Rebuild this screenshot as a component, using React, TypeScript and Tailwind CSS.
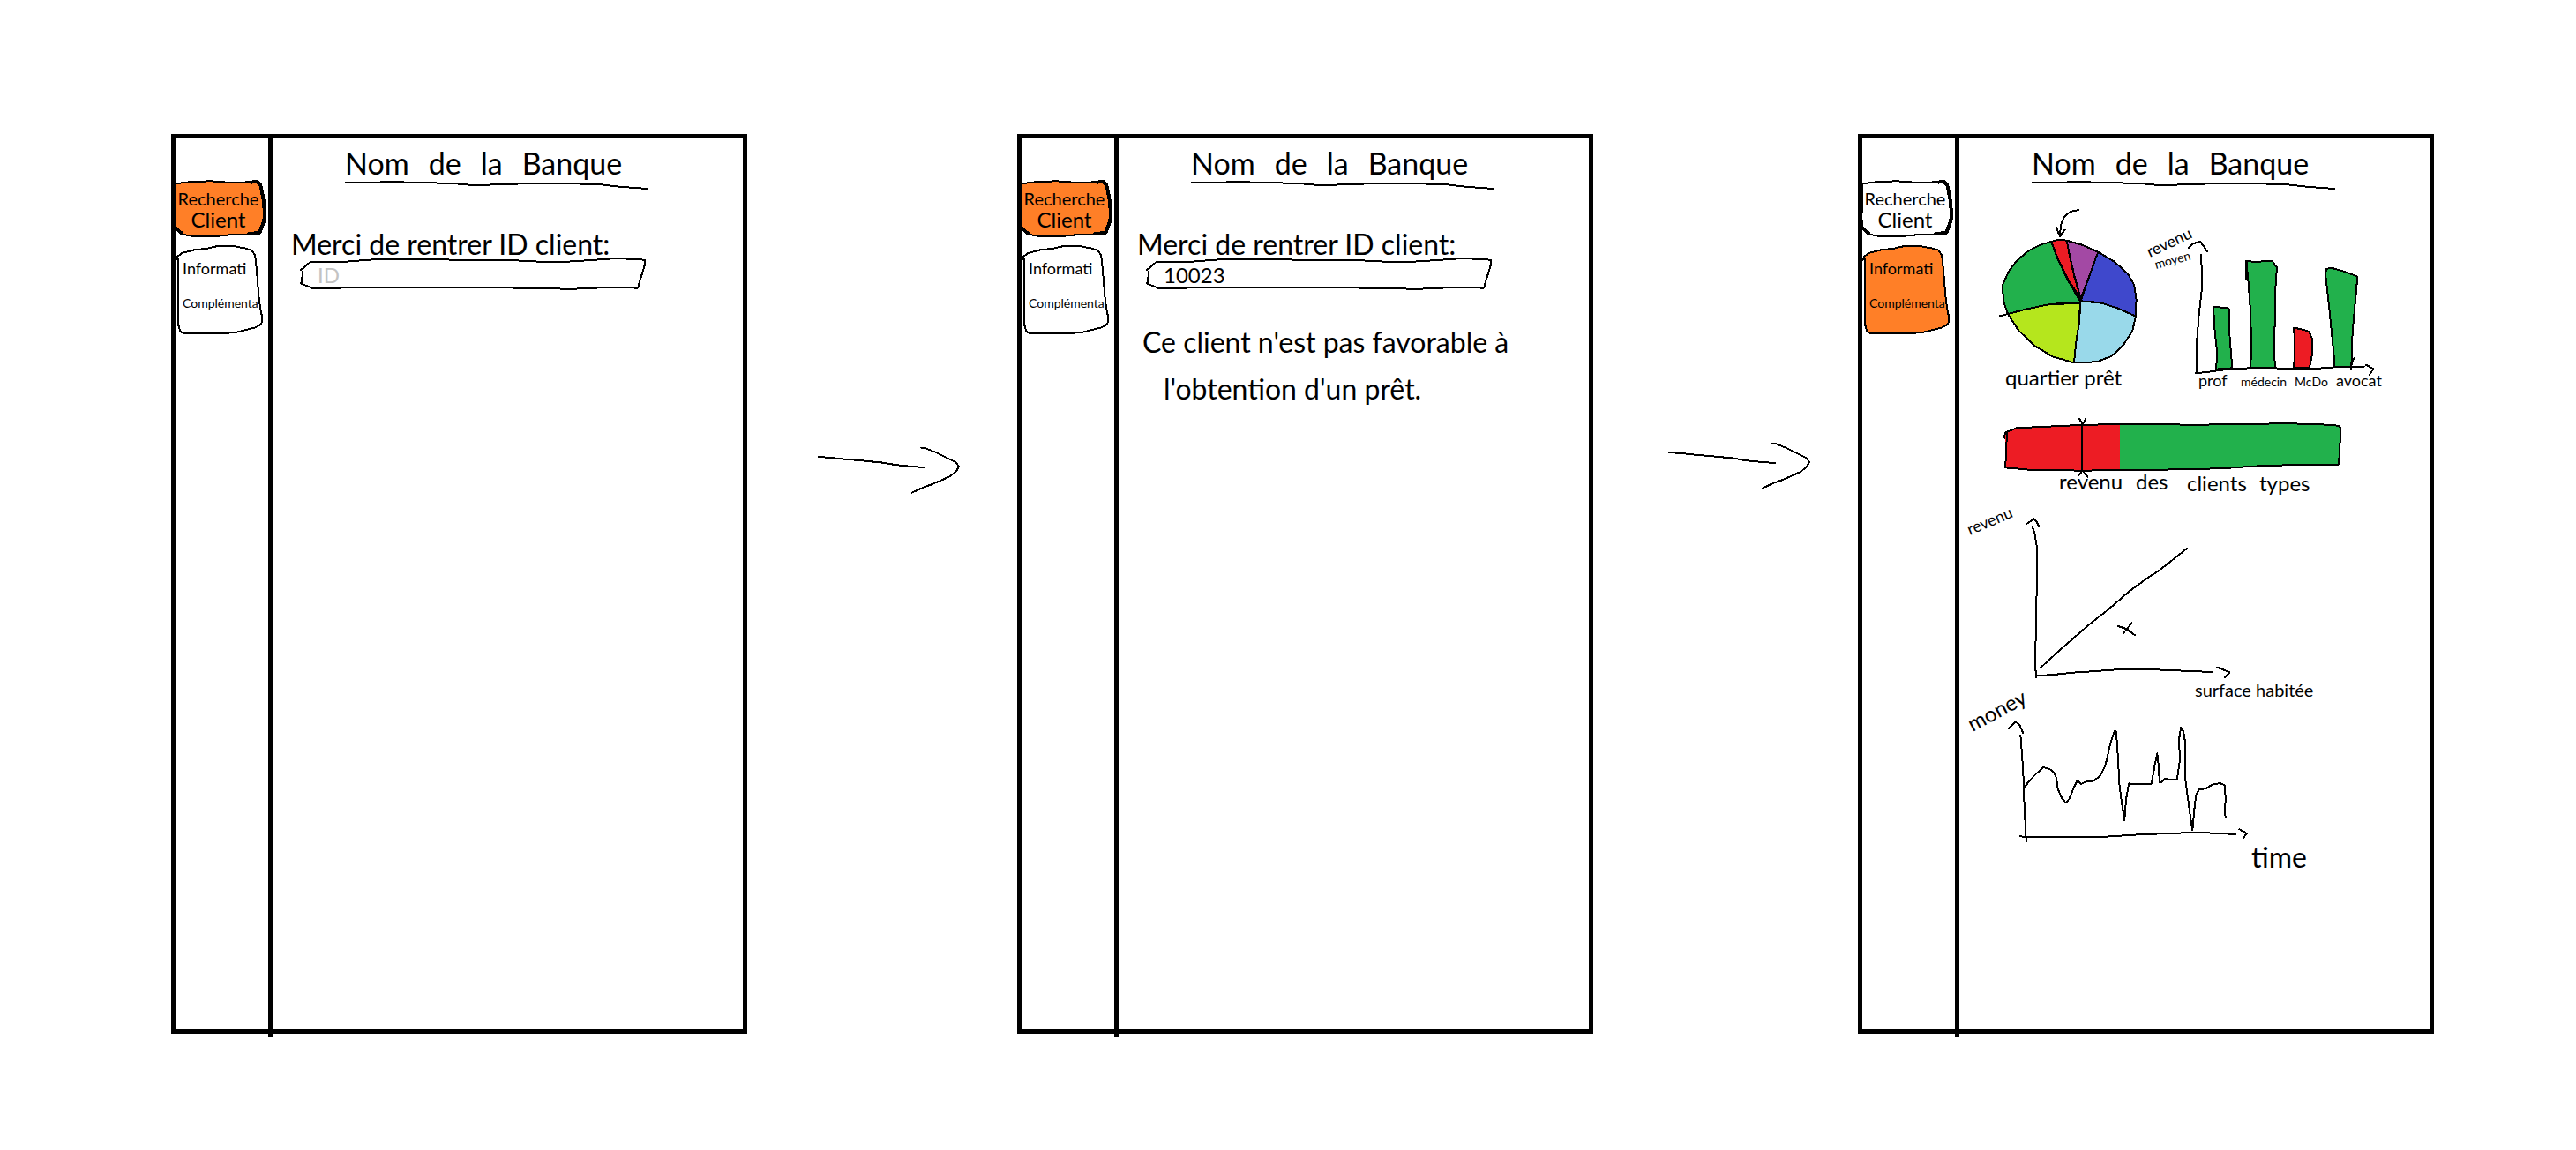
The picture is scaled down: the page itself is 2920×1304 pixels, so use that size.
import type { ReactNode } from "react";

type Page = "recherche" | "informations";

const ORANGE = "#ff7f27";
const GREEN = "#22b14c";
const RED = "#ed1c24";

const pen = {
  fill: "none",
  stroke: "#000",
  strokeWidth: 2,
  strokeLinejoin: "round" as const,
  strokeLinecap: "round" as const,
};

function Stroke({ d, fill = "none", width = 2 }: { d: string; fill?: string; width?: number }) {
  return <path d={d} {...pen} fill={fill} strokeWidth={width} vectorEffect="non-scaling-stroke" />;
}

function SearchButton({ active }: { active: boolean }) {
  return (
    <button type="button" className="relative h-16 w-full pr-2 text-xl leading-6">
      <svg viewBox="22 66 105 64" className="absolute inset-0 h-full w-full overflow-visible" shapeRendering="crispEdges">
        <g transform="scale(.3333)">
          <Stroke
            d="M66 208 L120 201 L185 199 L240 203 L300 203 L340 199 L356 212 L362 240 L368 275 L368 325 L360 350 L352 374 L310 380 L250 382 L190 388 L120 386 L88 380 L68 362 L64 330 L66 250 Z"
            fill={active ? ORANGE : "#fff"}
            width={2}
          />
          <Stroke d="M325 203 L342 200 L354 210 L360 235 L366 270 L370 320 L364 342 L352 374 L315 379 M88 378 L66 358" width={4} />
        </g>
      </svg>
      <span className="relative block">Recherche</span>
      <span className="relative block text-2xl leading-6">Client</span>
    </button>
  );
}

function InfoButton({ active }: { active: boolean }) {
  return (
    <button type="button" className="relative mt-2 h-[102px] w-full pb-2 pl-2 text-left leading-10">
      <svg viewBox="22 138 105 102" className="absolute inset-0 h-full w-full overflow-visible" shapeRendering="crispEdges">
        <g transform="scale(.3333)">
          <Stroke
            d="M68 468 L73 455 L88 444 L130 433 L175 428 L205 421 L260 420 L300 427 L325 434 L336 450 L342 500 L348 580 L354 630 L361 665 L358 686 L335 698 L270 714 L215 718 L95 718 L82 710 L76 690 L74 620 L76 540 L74 460"
            fill={active ? ORANGE : "#fff"}
          />
        </g>
      </svg>
      <span className="relative block text-lg leading-10">Informati</span>
      <span className="relative block text-sm leading-10">Complémenta</span>
    </button>
  );
}

function Title() {
  return (
    <header className="pt-2 pl-[82px]">
      <h1 className="flex gap-[22px] text-[34px] leading-10">
        <span>Nom</span>
        <span>de</span>
        <span>la</span>
        <span>Banque</span>
      </h1>
      <svg width="345" height="11" viewBox="0 0 345 11" shapeRendering="crispEdges" className="block">
        <path d="M1 2 L31 2 L49 1 L122 3 L144 5 L187 4 L205 3 L244 3 L287 4 L315 7 L343 9" {...pen} />
      </svg>
    </header>
  );
}

function Screen({ page, children }: { page: Page; children: ReactNode }) {
  return (
    <section className="flex min-h-[1020px] min-w-0 flex-1 border-[5px] border-black">
      <nav className="-mb-[9px] w-[110px] shrink-0 border-r-[5px] border-black pt-12">
        <SearchButton active={page === "recherche"} />
        <InfoButton active={page === "informations"} />
      </nav>
      <main className="min-w-0 flex-1">
        <Title />
        {children}
      </main>
    </section>
  );
}

function ClientForm({ id, value }: { id: string; value?: string }) {
  return (
    <form className="mt-[45px] pl-[21px]">
      <label htmlFor={id} className="block text-[32px] leading-8 whitespace-nowrap">
        Merci de rentrer ID client:
      </label>
      <div className="relative ml-[10px] h-9 w-[393px]">
        <svg viewBox="160 153 393 36" className="absolute inset-0 h-full w-full overflow-visible" shapeRendering="crispEdges">
          <g transform="scale(.4337 .3333)">
            <Stroke d="M372 498 L395 472 L470 472 L560 463 L900 464 L1010 471 L1070 470 L1200 459 L1270 464 L1270 482 L1252 560 L1190 557 L1085 563 L1000 562 L850 557 L520 558 L405 562 L372 545 L377 502" />
          </g>
        </svg>
        <input
          id={id}
          placeholder="ID"
          defaultValue={value}
          className="relative block h-full w-full bg-transparent pl-5 text-2xl outline-none placeholder:text-[#c3c3c3]"
        />
      </div>
    </form>
  );
}

function Arrow({ className }: { className: string }) {
  return (
    <div className={className}>
      <svg width="161" height="54" viewBox="26 26 161 54" shapeRendering="crispEdges" className="block">
        <g transform="scale(.3333)">
          <Stroke d="M80 114 L125 117 L160 121 L240 128 L300 134 L340 141 L400 147 L441 150" />
          <Stroke d="M429 83 L445 85 L480 99 L520 119 L548 133 L558 147 L550 161 L530 179 L500 193 L470 206 L435 219 L398 236" />
        </g>
      </svg>
    </div>
  );
}

function DistrictPie() {
  return (
    <svg width="160" height="215" viewBox="175 95 160 215" className="overflow-visible" role="img" aria-label="quartier prêt">
      <g transform="scale(.3333)" shapeRendering="crispEdges">
        <Stroke fill={GREEN} d="M806 608 L700 615 L620 632 L558 648 L543 605 L540 550 L560 505 L590 465 L630 432 L670 412 L706 402 L725 455 L760 530 Z" />
        <Stroke fill={RED} d="M806 596 L765 535 L728 460 L706 402 L725 396 L760 398 L768 450 L785 525 Z" />
        <Stroke fill="#a349a4" d="M806 596 L785 520 L768 450 L758 398 L810 413 L865 437 L840 505 Z" />
        <Stroke fill="#3f48cc" d="M806 604 L840 505 L865 437 L920 470 L965 510 L988 550 L995 600 L993 656 L930 628 L870 609 Z" />
        <Stroke fill="#99d9ea" d="M806 606 L870 609 L930 628 L993 656 L982 705 L950 755 L910 792 L860 811 L783 814 L790 745 L800 680 Z" />
        <Stroke fill="#b5e61d" d="M804 612 L700 615 L620 632 L558 648 L595 705 L650 757 L710 793 L783 814 L790 745 L800 680 Z" />
        <Stroke d="M530 655 L558 648 M800 294 L770 300 L750 318 L738 345 L735 382 M722 352 L735 384 L752 362" />
      </g>
      <text x="183" y="297" fontSize="24">quartier prêt</text>
    </svg>
  );
}

function IncomeByJob() {
  return (
    <svg width="276" height="215" viewBox="14 95 276 215" className="overflow-visible" role="img" aria-label="revenu moyen">
      <g transform="scale(.3333)" shapeRendering="crispEdges">
        <Stroke fill={GREEN} d="M277 836 L279 770 L272 710 L267 625 L310 626 L322 632 L320 690 L326 770 L331 832 Z" />
        <Stroke fill={GREEN} d="M392 830 L396 790 L394 650 L386 540 L379 468 L400 470 L468 469 L483 490 L478 560 L474 780 L477 830 Z" />
        <Stroke d="M379 468 L379 530" width={3} />
        <Stroke fill={RED} d="M539 831 L544 790 L541 695 L570 701 L592 708 L603 732 L602 790 L594 831 Z" />
        <Stroke fill={GREEN} d="M680 829 L674 760 L660 620 L648 510 L652 495 L668 491 L710 503 L757 521 L750 600 L740 710 L736 827 Z" />
        <Stroke d="M226 446 L228 560 L218 650 L210 750 L210 849 M206 850 L260 844 L310 837 L390 832 L540 833 L600 835 L680 829 L780 827 M746 797 L738 812 L735 834" />
        <Stroke d="M182 423 L200 408 L222 402 L232 415 L245 435 M786 821 L811 835 L798 855" />
      </g>
      <text x="17" y="152" fontSize="18" transform="rotate(-25 17 152)">revenu</text>
      <text x="24" y="165" fontSize="14" transform="rotate(-15 24 165)">moyen</text>
      <g fontSize="18">
        <text x="72" y="298">prof</text>
        <text x="120" y="298" fontSize="14">médecin</text>
        <text x="181" y="298" fontSize="14">McDo</text>
        <text x="228" y="298">avocat</text>
      </g>
    </svg>
  );
}

function IncomeGauge() {
  return (
    <svg width="533" height="105" viewBox="21 10 533 105" className="block overflow-visible" role="img" aria-label="revenu des clients types">
      <g transform="scale(.3571 .3333)" shapeRendering="crispEdges">
        <path fill={RED} d="M205 95 L240 76 L440 66 L568 64 L568 219 L450 219 L280 216 L206 210 Z" />
        <path fill={GREEN} d="M568 64 L820 65 L1075 61 L1265 68 L1270 90 L1263 200 L1010 206 L900 213 L780 217 L568 219 Z" />
        <Stroke d="M202 110 L204 92 L240 76 L340 71 L440 66 L560 63 L820 65 L1075 61 L1180 62 L1262 68 L1270 75 L1267 130 L1263 200 L1100 202 L1010 205 L900 213 L780 217 L570 219 L450 221 L280 218 L205 211 L207 160 L210 95" />
        <Stroke d="M448 64 V220 M440 44 L450 64 L460 44 M438 237 L450 221 L466 243" />
      </g>
      <g fontSize="24">
        <text x="134" y="95">revenu</text>
        <text x="221" y="95">des</text>
        <text x="279" y="97">clients</text>
        <text x="361" y="97">types</text>
      </g>
    </svg>
  );
}

function SurfaceChart() {
  return (
    <svg width="533" height="225" viewBox="21 115 533 225" className="block overflow-visible" role="img" aria-label="revenu par surface habitée">
      <g transform="scale(.3571 .3333)" shapeRendering="crispEdges">
        <Stroke d="M290 411 L297 430 L304 475 L304 640 L302 780 L299 850 L302 924 M302 918 L350 916 L420 908 L480 904 L570 897 L660 897 L770 902 L862 906" />
        <Stroke d="M271 403 L296 385 L304 395 L312 412 M877 890 L917 907 L901 924" />
        <Stroke d="M316 892 L390 820 L470 745 L530 695 L600 630 L660 583 L690 563 L740 521 L781 486" />
        <Stroke d="M563 750 L590 760 L616 781 M606 739 L579 775" />
      </g>
      <text x="33" y="147" fontSize="18" transform="rotate(-23 33 147)">revenu</text>
      <text x="288" y="330" fontSize="20">surface habitée</text>
    </svg>
  );
}

function TimeChart() {
  return (
    <svg width="533" height="205" viewBox="21 40 533 205" className="block overflow-visible" role="img" aria-label="money / time">
      <g transform="scale(.3571 .3333)" shapeRendering="crispEdges">
        <Stroke d="M253 221 L258 290 L263 380 L265 460 L269 540 L271 582 M251 565 L270 567 L510 567 L610 560 L700 556 L800 552 L870 554 L936 558" />
        <Stroke d="M215 199 L236 175 L250 186 L261 214 M948 541 L972 555 L960 570" />
        <Stroke d="M267 397 L280 377 L300 355 L325 330 L345 336 L360 348 L367 368 L372 405 L385 437 L397 451 L408 437 L420 405 L433 375 L445 387 L460 380 L485 376 L505 360 L522 325 L538 250 L551 207 L557 208 L562 290 L567 390 L574 450 L583 510 L588 440 L597 385 L610 387 L668 387 L680 320 L687 283 L692 330 L694 382 L702 380 L710 370 L750 372 L758 310 L757 230 L762 194 L770 208 L775 240 L776 370 L785 440 L795 520 L799 544 L804 480 L810 425 L820 405 L840 403 L860 390 L885 384 L901 391 L904 440 L901 490 L904 498" />
      </g>
      <text x="36" y="70" fontSize="24" transform="rotate(-28 36 70)">money</text>
      <text x="352" y="224" fontSize="32">time</text>
    </svg>
  );
}

export default function App() {
  return (
    <div className="flex items-start bg-white pt-[152px] pr-[161px] pb-32 pl-[194px] font-['Lato',sans-serif] text-black">
      <Screen page="recherche">
        <ClientForm id="client-vide" />
      </Screen>
      <Arrow className="w-[306px] shrink-0 pt-[354px] pl-20" />
      <Screen page="recherche">
        <ClientForm id="client-saisi" value="10023" />
        <p className="mt-8 pl-[27px] text-[32px] leading-[53px] whitespace-nowrap">
          <span className="block">Ce client n'est pas favorable à</span>
          <span className="block pl-6">l'obtention d'un prêt.</span>
        </p>
      </Screen>
      <Arrow className="w-[300px] shrink-0 pt-[349px] pl-[85px]" />
      <Screen page="informations">
        <div className="mt-[19px] flex gap-[9px] pl-11">
          <DistrictPie />
          <IncomeByJob />
        </div>
        <div className="mt-5 flex flex-col">
          <IncomeGauge />
          <SurfaceChart />
          <TimeChart />
        </div>
      </Screen>
    </div>
  );
}
